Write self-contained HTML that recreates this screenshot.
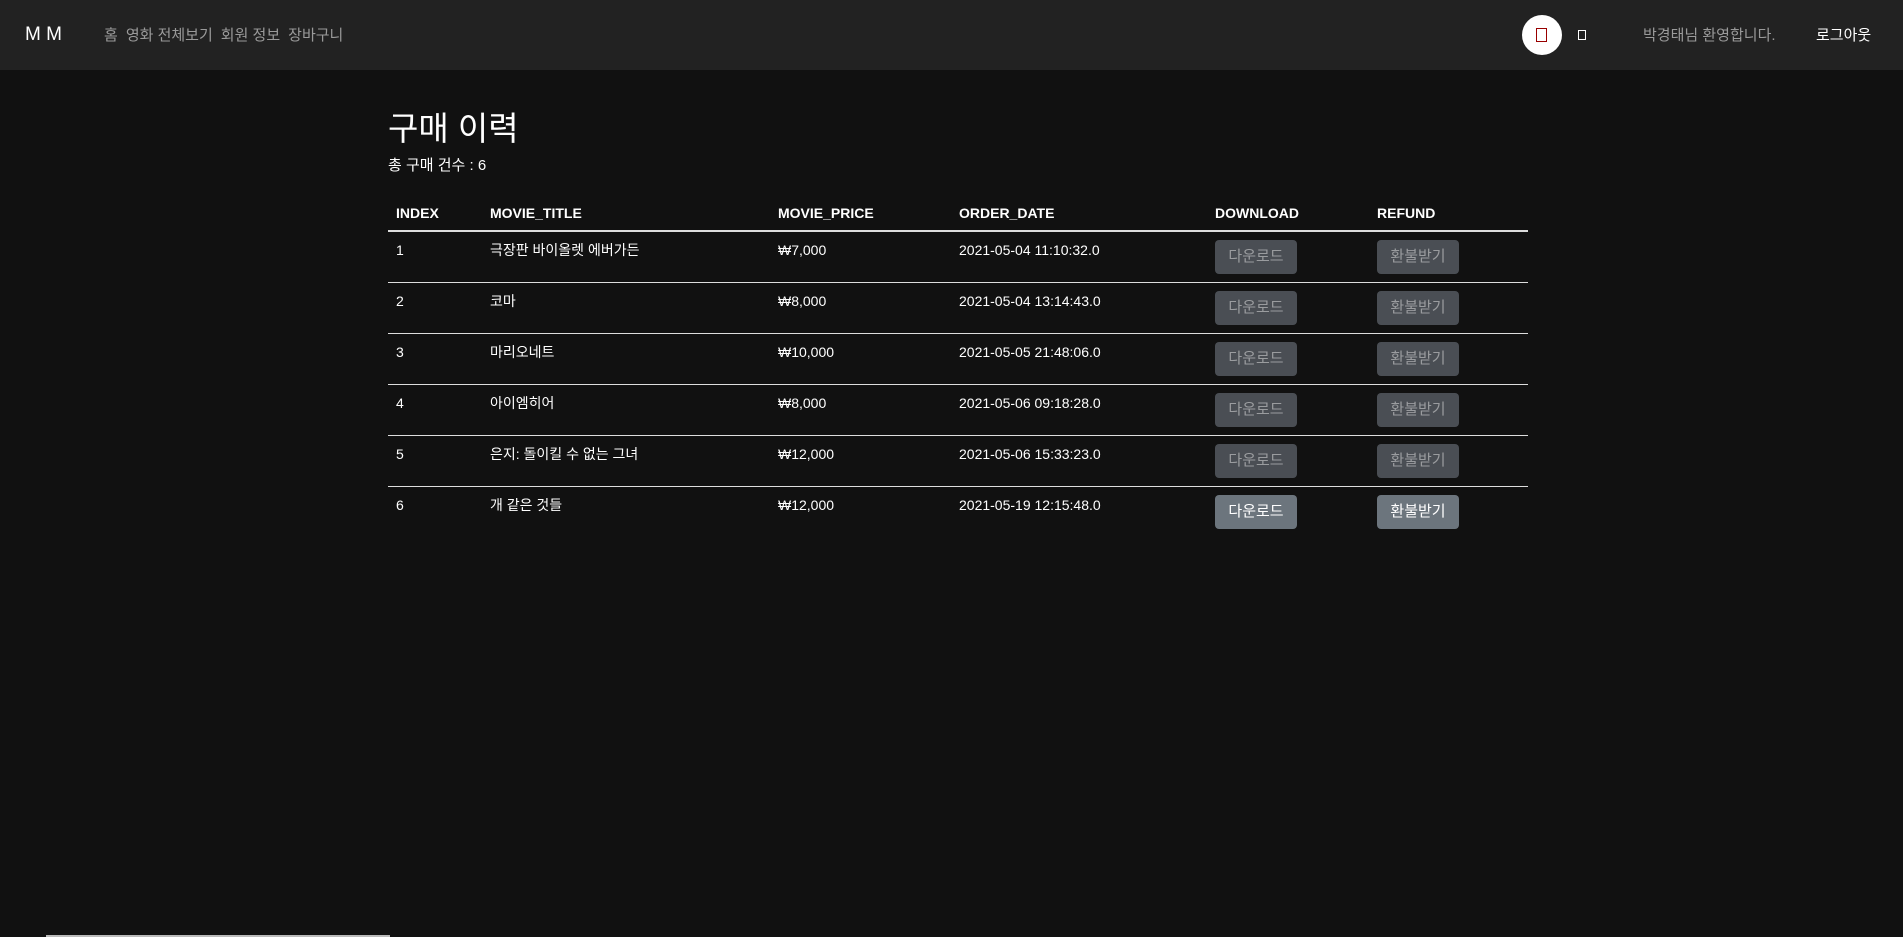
<!DOCTYPE html>
<html><head><meta charset="utf-8"><style>
*{box-sizing:border-box;margin:0;padding:0}
body{width:1903px;height:937px;background:#111;color:#fff;font-family:"Liberation Sans","Noto Sans CJK KR",sans-serif;font-size:14px;position:relative;overflow:hidden}
.nav{position:absolute;left:0;top:0;width:1903px;height:70px;background:#222}
.brand{position:absolute;left:25px;top:25px;font-size:19px;color:#fff;line-height:20px}
.links{position:absolute;left:104px;top:26px;font-size:15px;color:#9a9a9a;line-height:20px}
.links span{margin-right:8px}
.circ{position:absolute;left:1522px;top:15px;width:40px;height:40px;border-radius:50%;background:#fff}
.circ i{position:absolute;left:14px;top:13px;width:11px;height:14px;border:1.5px solid #900}
.sm{position:absolute;left:1578px;top:30px;width:8px;height:10px;border:1.5px solid #fff}
.wel{position:absolute;left:1643px;top:26px;color:#9a9a9a;font-size:15px;line-height:20px}
.out{position:absolute;left:1816px;top:26px;color:#fff;font-size:15px;line-height:20px}
h2{position:absolute;left:388px;top:109px;font-size:33px;font-weight:400;line-height:40px}
.cnt{position:absolute;left:388px;top:157px;font-size:15px;line-height:18px}
.tbl{position:absolute;left:388px;top:195px;width:1140px}
.hd{height:37px;border-bottom:2px solid #ddd;position:relative;font-weight:bold;font-size:14px}
.row{height:51px;border-bottom:1px solid #ddd;position:relative}
.row:last-child{border-bottom:none}
.c{position:absolute;top:9px;line-height:18px;height:18px}
.hd .c{top:9px}
.btn{position:absolute;top:8px;width:82px;height:34px;border-radius:4px;background:#4a4e54;color:#9a9c9f;text-align:center;line-height:34px;font-size:15px}
.act .btn{background:#6c757d;color:#fff}
</style></head><body>
<div class="nav">
<div class="brand">M M</div>
<div class="links"><span>홈</span><span>영화 전체보기</span><span>회원 정보</span><span>장바구니</span></div>
<div class="circ"><i></i></div>
<div class="sm"></div>
<div class="wel">박경태님 환영합니다.</div>
<div class="out">로그아웃</div>
</div>
<h2>구매 이력</h2>
<div class="cnt">총 구매 건수 : 6</div>
<div class="tbl">
<div class="hd"><span class="c" style="left:8px">INDEX</span><span class="c" style="left:102px">MOVIE_TITLE</span><span class="c" style="left:390px">MOVIE_PRICE</span><span class="c" style="left:571px">ORDER_DATE</span><span class="c" style="left:827px">DOWNLOAD</span><span class="c" style="left:989px">REFUND</span></div>
<div class="row"><span class="c" style="left:8px">1</span><span class="c" style="left:102px">극장판 바이올렛 에버가든</span><span class="c" style="left:390px">₩7,000</span><span class="c" style="left:571px">2021-05-04 11:10:32.0</span><span class="btn" style="left:827px">다운로드</span><span class="btn" style="left:989px">환불받기</span></div>
<div class="row"><span class="c" style="left:8px">2</span><span class="c" style="left:102px">코마</span><span class="c" style="left:390px">₩8,000</span><span class="c" style="left:571px">2021-05-04 13:14:43.0</span><span class="btn" style="left:827px">다운로드</span><span class="btn" style="left:989px">환불받기</span></div>
<div class="row"><span class="c" style="left:8px">3</span><span class="c" style="left:102px">마리오네트</span><span class="c" style="left:390px">₩10,000</span><span class="c" style="left:571px">2021-05-05 21:48:06.0</span><span class="btn" style="left:827px">다운로드</span><span class="btn" style="left:989px">환불받기</span></div>
<div class="row"><span class="c" style="left:8px">4</span><span class="c" style="left:102px">아이엠히어</span><span class="c" style="left:390px">₩8,000</span><span class="c" style="left:571px">2021-05-06 09:18:28.0</span><span class="btn" style="left:827px">다운로드</span><span class="btn" style="left:989px">환불받기</span></div>
<div class="row"><span class="c" style="left:8px">5</span><span class="c" style="left:102px">은지: 돌이킬 수 없는 그녀</span><span class="c" style="left:390px">₩12,000</span><span class="c" style="left:571px">2021-05-06 15:33:23.0</span><span class="btn" style="left:827px">다운로드</span><span class="btn" style="left:989px">환불받기</span></div>
<div class="row act"><span class="c" style="left:8px">6</span><span class="c" style="left:102px">개 같은 것들</span><span class="c" style="left:390px">₩12,000</span><span class="c" style="left:571px">2021-05-19 12:15:48.0</span><span class="btn" style="left:827px">다운로드</span><span class="btn" style="left:989px">환불받기</span></div>
</div>
<div style="position:absolute;left:46px;top:935px;width:344px;height:2px;background:#bbb"></div>
</body></html>
